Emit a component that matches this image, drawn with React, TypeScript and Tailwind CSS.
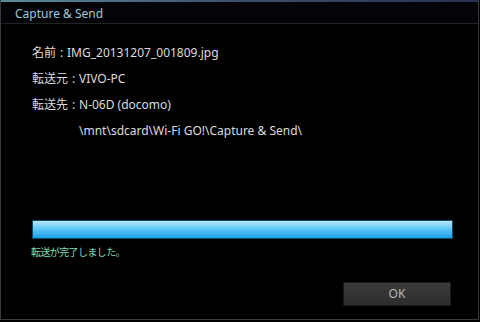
import React from 'react';

const font = { fontFamily: '"Noto Sans", "Noto Sans CJK JP", sans-serif' };

function Row({ label, value }: { label: string; value: string }) {
  return (
    <div className="flex">
      <span>{label}</span>
      <span className="inline-block w-[11px] text-center">:</span>
      <span>{value}</span>
    </div>
  );
}

export default function App() {
  return (
    <div className="w-[480px] h-[322px] bg-black overflow-hidden" style={font}>
      <div className="w-[479px] h-[320px] flex flex-col border-l border-r border-b border-[#3a3a3a]">
        {/* top accent line */}
        <div className="h-[2px] bg-gradient-to-r from-[#5a8c98] via-[#3c4f70] to-[#2a3050]" />

        {/* title bar */}
        <div className="h-[22px] flex items-center px-[14px] pt-[3px] bg-[#040408] border-b border-[#232323]">
          <span className="text-[12px] text-[#9fc8d8] leading-none">Capture &amp; Send</span>
        </div>

        {/* details */}
        <div className="flex flex-col pl-[31px] pt-[16px] text-[12px] text-[#dcdcdc] leading-[26px]">
          <Row label="名前" value="IMG_20131207_001809.jpg" />
          <Row label="転送元" value="VIVO-PC" />
          <Row label="転送先" value="N-06D (docomo)" />
          <div className="pl-[47px]">\mnt\sdcard\Wi-Fi GO!\Capture &amp; Send\</div>
        </div>

        {/* progress */}
        <div className="mt-[76px] ml-[31px] w-[421px] h-[19px] border border-[#0d4a66] bg-gradient-to-b from-[#b6e6fb] via-[#5cc8f6] via-45% to-[#12a0ea]" />
        <div className="ml-[30px] mt-[5px] text-[10px] tracking-[-0.6px] text-[#7fdcb4] leading-[16px]">転送が完了しました。</div>

        {/* buttons */}
        <div className="flex justify-end pr-[27px] mt-[22px]">
          <button className="w-[108px] h-[24px] bg-gradient-to-b from-[#3c3c3c] to-[#2c2c2c] border border-[#1a1a1a] text-[12px] text-[#b8b8b8]">
            OK
          </button>
        </div>
      </div>
    </div>
  );
}
